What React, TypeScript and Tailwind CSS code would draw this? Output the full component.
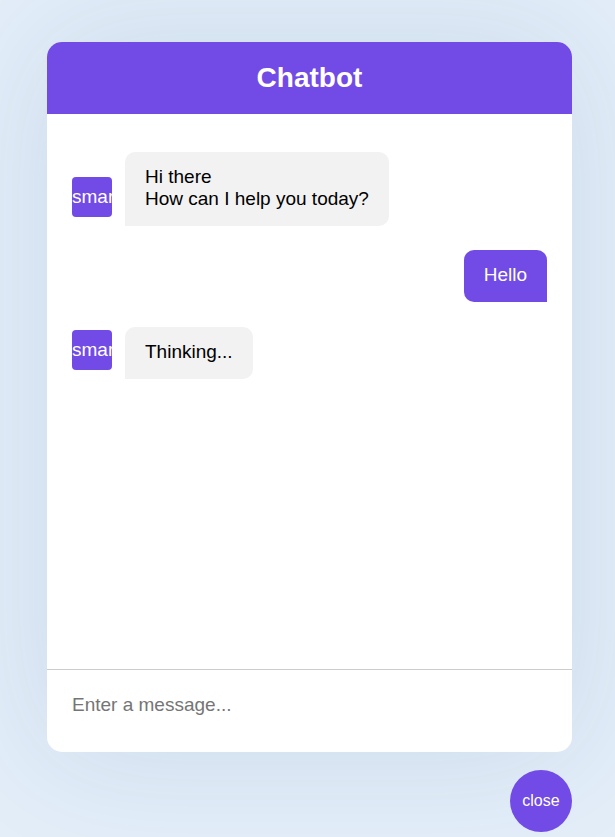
const messages = [
    { from: "bot", text: ["Hi there", "How can I help you today?"] },
    { from: "user", text: ["Hello"] },
    { from: "bot", text: ["Thinking..."] },
];

const BotAvatar = () => (
    <span className="w-10 h-10 shrink-0 self-end mb-[9px] mr-[13px] rounded-[4px] bg-[#724ae5] text-white text-center leading-[40px] overflow-hidden whitespace-nowrap">
        smart_toy
    </span>
);

export default function App() {
    return (
        <div className="min-h-screen bg-[#e3eef9] pt-[42px] pl-[47px] pr-[43px] font-['Liberation_Sans',Arial,sans-serif]">
            <div className="w-[525px] h-[710px] bg-white rounded-[15px] overflow-hidden flex flex-col shadow-[0_0_128px_rgba(30,70,120,0.12)]">
                {/* Header */}
                <header className="h-[72px] shrink-0 bg-[#724ae5] flex items-center justify-center">
                    <h2 className="text-white text-[28px] font-bold">Chatbot</h2>
                </header>

                {/* Messages */}
                <ul className="flex-1 px-[25px] pt-[38px] text-[19px] leading-[22px] text-black">
                    {messages.map((m, i) => (
                        <li
                            key={i}
                            className={`flex ${m.from === "user" ? "justify-end" : ""} ${i === 1 ? "mt-[24px]" : ""} ${i === 2 ? "mt-[25px]" : ""}`}
                        >
                            {m.from === "bot" && <BotAvatar />}
                            <p
                                className={
                                    m.from === "user"
                                        ? "bg-[#724ae5] text-white px-5 pt-[14px] pb-[16px] rounded-[10px] rounded-br-none"
                                        : "bg-[#f2f2f2] px-5 pt-[14px] pb-[16px] rounded-[10px] rounded-bl-none"
                                }
                            >
                                {m.text.map((line, j) => (
                                    <span key={j} className="block">{line}</span>
                                ))}
                            </p>
                        </li>
                    ))}
                </ul>

                {/* Input */}
                <div className="h-[83px] shrink-0 border-t border-[#cccccc]">
                    <textarea
                        placeholder="Enter a message..."
                        className="w-full h-full resize-none outline-none px-[25px] pt-[24px] text-[19px] leading-[22px] placeholder:text-[#757575]"
                    />
                </div>
            </div>

            <div className="w-[525px] flex justify-end mt-[18px]">
                <button className="w-[62px] h-[62px] rounded-full bg-[#724ae5] text-white text-[16px] flex items-center justify-center">
                    close
                </button>
            </div>
        </div>
    );
}
